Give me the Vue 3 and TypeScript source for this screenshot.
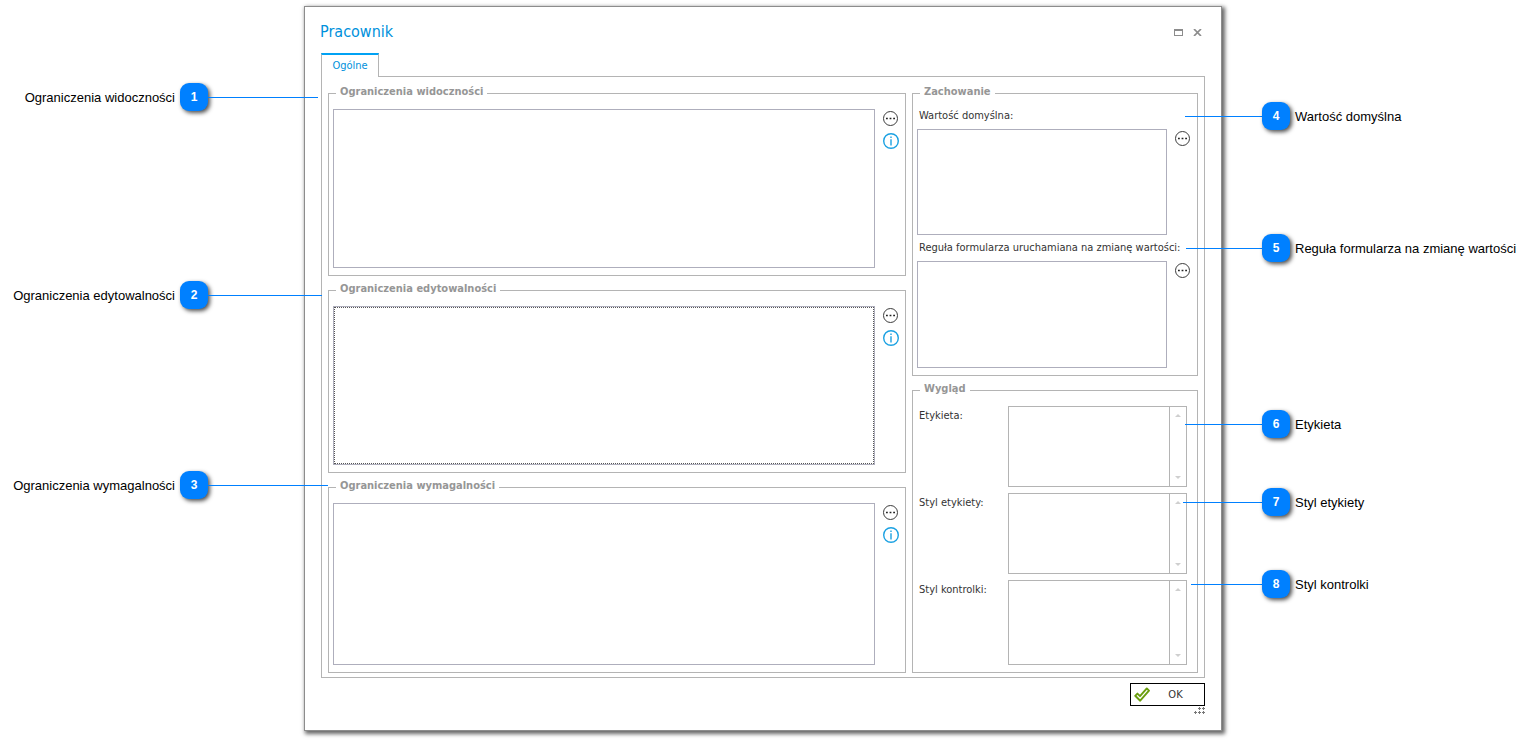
<script setup lang="ts">
interface Callout {
  id: number
  text: string
  side: 'left' | 'right'
  top: number
  line: number
}

interface Restriction {
  id: string
  title: string
  focused: boolean
}

const restrictions: Restriction[] = [
  { id: 'visibility', title: 'Ograniczenia widoczności', focused: false },
  { id: 'editability', title: 'Ograniczenia edytowalności', focused: true },
  { id: 'required', title: 'Ograniczenia wymagalności', focused: false },
]

const behaviours = [
  { id: 'default-value', label: 'Wartość domyślna:' },
  { id: 'change-rule', label: 'Reguła formularza uruchamiana na zmianę wartości:' },
]

const appearance = [
  { id: 'label', label: 'Etykieta:' },
  { id: 'label-style', label: 'Styl etykiety:' },
  { id: 'control-style', label: 'Styl kontrolki:' },
]

const callouts: Callout[] = [
  { id: 1, text: 'Ograniczenia widoczności', side: 'left', top: 83, line: 110 },
  { id: 2, text: 'Ograniczenia edytowalności', side: 'left', top: 281, line: 114 },
  { id: 3, text: 'Ograniczenia wymagalności', side: 'left', top: 471, line: 120 },
  { id: 4, text: 'Wartość domyślna', side: 'right', top: 102, line: 77 },
  { id: 5, text: 'Reguła formularza na zmianę wartości', side: 'right', top: 234, line: 76 },
  { id: 6, text: 'Etykieta', side: 'right', top: 410, line: 77 },
  { id: 7, text: 'Styl etykiety', side: 'right', top: 488, line: 79 },
  { id: 8, text: 'Styl kontrolki', side: 'right', top: 570, line: 71 },
]
</script>

<template>
  <main class="page">
    <section class="dialog" role="dialog" aria-labelledby="dialog-title">
      <header class="titlebar">
        <h1 id="dialog-title" class="title">Pracownik</h1>
        <div class="window-buttons">
          <button type="button" class="icon-button" aria-label="Maksymalizuj">
            <svg width="9" height="7" viewBox="0 0 9 7" shape-rendering="crispEdges">
              <path d="M0 0h9v7H0zM1 2v4h7V2z" fill="#8c8c8c" fill-rule="evenodd" />
            </svg>
          </button>
          <button type="button" class="icon-button" aria-label="Zamknij">
            <svg width="9" height="7" viewBox="0 0 9 7">
              <path d="M1 0l7 7M8 0L1 7" stroke="#8c8c8c" stroke-width="1.7" fill="none" />
            </svg>
          </button>
        </div>
      </header>

      <div class="tabs" role="tablist">
        <button type="button" class="tab" role="tab" aria-selected="true">Ogólne</button>
      </div>

      <div class="panel" role="tabpanel">
        <div class="column">
          <fieldset v-for="item in restrictions" :key="item.id" class="group">
            <legend class="legend">{{ item.title }}</legend>
            <div class="editor">
              <textarea
                class="area"
                :class="{ focused: item.focused }"
                :aria-label="item.title"
              ></textarea>
              <div class="actions">
                <button type="button" class="icon-button" aria-label="Edytuj">
                  <svg width="16" height="16" viewBox="0 0 16 16">
                    <circle cx="7.5" cy="8.5" r="7" fill="#fff" stroke="#3c3c3c" />
                    <path d="M3 7.700h1.800v1.600H3zM6.600 7.700h1.800v1.600H6.600zM10.200 7.700H12v1.600h-1.800z" fill="#222" />
                  </svg>
                </button>
                <button type="button" class="icon-button" aria-label="Informacja">
                  <svg width="16" height="16" viewBox="0 0 16 16">
                    <circle cx="8" cy="8" r="7.300" fill="#fff" stroke="#1ba1e2" stroke-width="1.400" />
                    <path d="M7.300 3.500h1.400v1.600H7.300zM7.300 6.300h1.400v6.200H7.300z" fill="#1ba1e2" />
                  </svg>
                </button>
              </div>
            </div>
          </fieldset>
        </div>

        <div class="column">
          <fieldset class="group">
            <legend class="legend">Zachowanie</legend>
            <div class="behaviours">
              <div v-for="item in behaviours" :key="item.id" class="behaviour">
                <label class="label" :for="item.id">{{ item.label }}</label>
                <div class="behaviour-row">
                  <textarea :id="item.id" class="area"></textarea>
                  <button type="button" class="icon-button" aria-label="Edytuj">
                    <svg width="16" height="16" viewBox="0 0 16 16">
                      <circle cx="7.5" cy="8.5" r="7" fill="#fff" stroke="#3c3c3c" />
                      <path d="M3 7.700h1.800v1.600H3zM6.600 7.700h1.800v1.600H6.600zM10.200 7.700H12v1.600h-1.800z" fill="#222" />
                    </svg>
                  </button>
                </div>
              </div>
            </div>
          </fieldset>

          <fieldset class="group">
            <legend class="legend">Wygląd</legend>
            <div class="appearance">
              <div v-for="item in appearance" :key="item.id" class="appearance-row">
                <label class="label" :for="item.id">{{ item.label }}</label>
                <div class="scroll-box">
                  <textarea :id="item.id" class="plain-area"></textarea>
                  <div class="track" aria-hidden="true">
                    <svg width="6" height="3" viewBox="0 0 6 3"><path d="M0 3L3 0l3 3z" fill="#cfcfcf" /></svg>
                    <svg width="6" height="3" viewBox="0 0 6 3"><path d="M0 0l3 3 3-3z" fill="#cfcfcf" /></svg>
                  </div>
                </div>
              </div>
            </div>
          </fieldset>
        </div>
      </div>

      <footer class="footer">
        <button type="button" class="ok">
          <svg class="check" width="16" height="16" viewBox="0 0 16 16">
            <path
              d="M1.200 8.800L3.400 6.600 6 9.200 12.800 1.400 15 3.600 6.200 13.700z"
              fill="#fff"
              stroke="#6a9e0e"
              stroke-width="1.900"
              stroke-linejoin="round"
            />
          </svg>
          <span class="ok-text">OK</span>
        </button>
        <svg class="grip" width="11" height="7" viewBox="0 0 11 7" shape-rendering="crispEdges">
          <path
            d="M5 0h1v1h1v1H6v1H5V2H4V1h1zM9 0h1v1h1v1h-1v1H9V2H8V1h1zM1 4h1v1h1v1H2v1H1V6H0V5h1zM5 4h1v1h1v1H6v1H5V6H4V5h1zM9 4h1v1h1v1h-1v1H9V6H8V5h1z"
            fill="#777"
          />
        </svg>
      </footer>
    </section>

    <ol class="callouts">
      <li
        v-for="item in callouts"
        :key="item.id"
        class="callout"
        :class="item.side"
        :style="{ top: item.top + 'px' }"
      >
        <span class="callout-text">{{ item.text }}</span>
        <span class="badge">{{ item.id }}</span>
        <span class="line" :style="{ width: item.line + 'px' }"></span>
      </li>
    </ol>
  </main>
</template>

<style>
body {
  margin: 0;
  background: #fff;
}
</style>

<style scoped>
.page {
  position: relative;
  box-sizing: border-box;
  padding: 6px 310px 10px 304px;
  font: 11px/14px Tahoma, 'DejaVu Sans Condensed', sans-serif;
  color: #333;
}

.dialog {
  box-sizing: border-box;
  padding: 0 16px 16px;
  background: #fff;
  border: 1px solid #8c8c8c;
  box-shadow: 2px 2px 4px 1px rgba(0, 0, 0, 0.6);
}

.titlebar {
  display: flex;
  justify-content: space-between;
  align-items: center;
  height: 46px;
  padding-top: 4px;
  box-sizing: border-box;
}

.title {
  margin: 0 0 0 -1px;
  font-size: 16px;
  line-height: 20px;
  font-weight: 400;
  color: #0091dc;
}

.window-buttons {
  display: flex;
  gap: 10px;
  padding-right: 3px;
}

.icon-button {
  display: block;
  flex: none;
  padding: 0;
  border: 0;
  background: none;
}

.icon-button svg {
  display: block;
}

.tabs {
  display: flex;
  margin-bottom: -1px;
}

.tab {
  position: relative;
  box-sizing: border-box;
  width: 58px;
  height: 24px;
  padding: 0;
  border: 1px solid #b4b4b4;
  border-top: 2px solid #00a2f4;
  border-bottom: 0;
  background: #fff;
  font: inherit;
  color: #0091dc;
}

.panel {
  display: grid;
  grid-template-columns: 1fr 286px;
  gap: 6px;
  padding: 9px 6px 4px;
  border: 1px solid #b4b4b4;
}

.column {
  display: flex;
  flex-direction: column;
  gap: 7px;
}

.group {
  min-width: 0;
  margin: 0;
  padding: 8px 6px 7px 4px;
  border: 1px solid #b4b4b4;
}

.legend {
  margin-left: 3px;
  padding: 0 4px 3px;
  font-weight: 700;
  line-height: 12px;
  color: #969696;
}

.editor {
  display: flex;
  gap: 8px;
  height: 159px;
}

.group:last-child .editor {
  height: 162px;
}

.area {
  box-sizing: border-box;
  flex: 1;
  min-width: 0;
  border: 1px solid #aeaebc;
  padding: 2px;
  margin: 0;
  resize: none;
  background: #fff;
  font: inherit;
}

.focused {
  outline: 1px dotted #555;
  outline-offset: -2px;
}

.actions {
  display: flex;
  flex-direction: column;
  gap: 7px;
  padding-top: 1px;
}

.behaviours {
  display: flex;
  flex-direction: column;
  gap: 6px;
}

.label {
  display: block;
  padding-left: 2px;
  white-space: nowrap;
}

.behaviour-row {
  display: flex;
  gap: 8px;
  height: 106px;
  margin-top: 6px;
}

.behaviour:last-child .behaviour-row {
  height: 107px;
}

.behaviour-row .icon-button {
  align-self: flex-start;
  padding-top: 1px;
}

.appearance {
  display: grid;
  grid-template-rows: 81px 81px 85px;
  gap: 6px;
  padding-right: 4px;
}

.appearance-row {
  display: grid;
  grid-template-columns: 91px 1fr;
}

.appearance-row .label {
  padding-top: 3px;
}

.scroll-box {
  display: flex;
  border: 1px solid #b4b4b4;
}

.plain-area {
  flex: 1;
  min-width: 0;
  margin: 0;
  padding: 2px;
  border: 0;
  resize: none;
  background: #fff;
  font: inherit;
}

.track {
  display: flex;
  flex-direction: column;
  justify-content: space-between;
  align-items: center;
  width: 16px;
  padding: 7px 0;
  border-left: 1px solid #b4b4b4;
}

.track svg {
  display: block;
}

.footer {
  display: flex;
  flex-direction: column;
  align-items: flex-end;
  gap: 1px;
  margin-top: 5px;
}

.ok {
  display: flex;
  align-items: center;
  box-sizing: border-box;
  width: 75px;
  height: 23px;
  padding: 0 3px;
  border: 1px solid #000;
  background: #fff;
  font: inherit;
  color: #333;
}

.ok-text {
  flex: 1;
  text-align: center;
}

.grip {
  display: block;
}

.callouts {
  position: absolute;
  inset: 0;
  margin: 0;
  padding: 0;
  list-style: none;
  pointer-events: none;
  font-family: 'Liberation Sans', Arial, sans-serif;
  font-size: 13px;
  color: #000;
}

.callout {
  position: absolute;
  display: flex;
  align-items: center;
  height: 28px;
  white-space: nowrap;
}

.callout.left {
  left: 0;
}

.callout.right {
  right: 0;
  flex-direction: row-reverse;
}

.callout-text {
  box-sizing: border-box;
  padding-top: 2px;
}

.left .callout-text {
  width: 180px;
  padding-right: 5px;
  text-align: right;
}

.right .callout-text {
  width: 242px;
  padding-left: 5px;
}

.badge {
  width: 28px;
  height: 28px;
  border-radius: 9px;
  background: #0080ff;
  box-shadow: 2px 2px 4px rgba(0, 0, 0, 0.7);
  color: #fff;
  font-size: 12px;
  font-weight: 700;
  line-height: 28px;
  text-align: center;
}

.line {
  height: 1px;
  background: #0080ff;
}
</style>
